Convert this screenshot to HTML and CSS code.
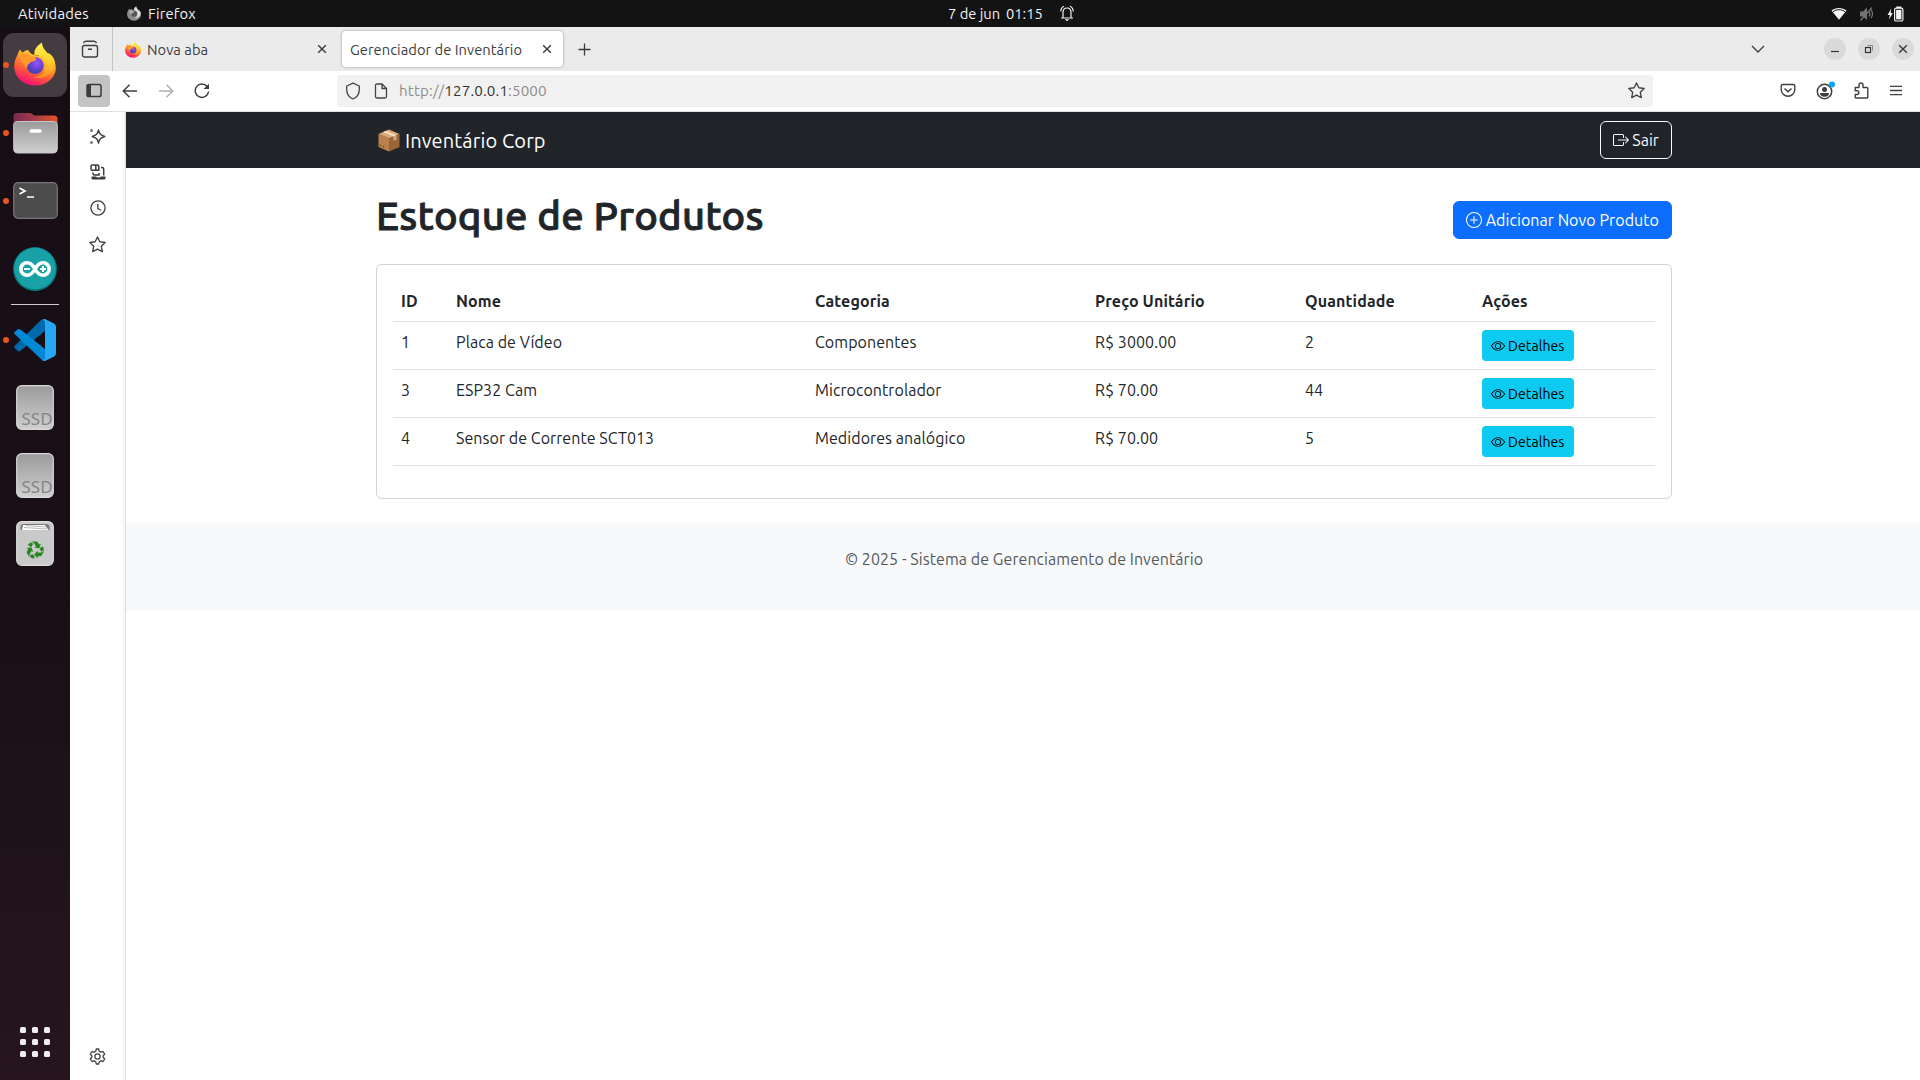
FILE: index.html
```html
<!DOCTYPE html>
<html lang="pt-BR">
<head>
<meta charset="utf-8">
<title>Gerenciador de Inventário</title>
<link rel="stylesheet" href="styles.css">
</head>
<body>
<svg class="defs" width="0" height="0" aria-hidden="true">
  <defs>
    <linearGradient id="fx-body" x1=".8" y1="0" x2=".3" y2="1"><stop offset="0" stop-color="#fff44f"/><stop offset=".35" stop-color="#ffa62b"/><stop offset=".65" stop-color="#ff5a35"/><stop offset="1" stop-color="#f5087f"/></linearGradient>
    <linearGradient id="fx-tail" x1=".5" y1="0" x2=".5" y2="1"><stop offset="0" stop-color="#fff550"/><stop offset=".5" stop-color="#ffd22c"/><stop offset="1" stop-color="#ff8d24"/></linearGradient>
    <radialGradient id="fx-globe" cx=".6" cy=".35"><stop offset="0" stop-color="#9059ff"/><stop offset=".6" stop-color="#7340e0"/><stop offset="1" stop-color="#4b45b5"/></radialGradient>
    <linearGradient id="gray" x1="0" y1="0" x2="0" y2="1"><stop offset="0" stop-color="#9b9b9b"/><stop offset="1" stop-color="#cfcfcf"/></linearGradient>
    <linearGradient id="folder" x1="0" y1="0" x2="1" y2="0"><stop offset="0" stop-color="#762b50"/><stop offset=".5" stop-color="#a83c46"/><stop offset="1" stop-color="#e95420"/></linearGradient>
    <symbol id="firefox" viewBox="0 0 42 44">
      <path fill="url(#fx-body)" d="M3 14C4 11 5 9 6 7.500C7 9 8 10 9 10.500C10 9 12 8 14 8C16 12 20 13 25 14C30 13 34 9 37 13C41 18 43 25 41 31C38 39 30 43.500 21 43.500C10 43.500 1 36 .3 26C0 22 1 17 3 14Z"/>
      <path fill="url(#fx-tail)" d="M28 .5C21 5 20 9 20.500 13C29 13 33 20 31 27C30 32 25 35 20 35C29 38 38 33 40.500 25C42 20 40 15 36 12.500C37 14 37 16 37 17C35 10 28 8 28 .5Z"/>
      <circle fill="url(#fx-globe)" cx="21" cy="23.500" r="8.600"/>
      <path fill="#ff9a2b" d="M6 14C10 11 14 13 17 14.500C21 14 23 16 22 18C20 20 17 19 16 21C14 22 13 24 13 26C8 22 7 18 6 14Z"/>
    </symbol>
    <symbol id="firefox-mono" viewBox="0 0 42 44">
      <path fill="#8c8c8c" d="M3 14C4 11 5 9 6 7.500L9 10.500L14 8C16 12 20 13 25 14C30 13 34 9 37 13C41 18 43 25 41 31C38 39 30 43.500 21 43.500C10 43.500 1 36 .3 26C0 22 1 17 3 14Z"/>
      <path fill="#dcdcdc" d="M28 .5C21 5 20 9 20.500 13C29 13 33 20 31 27C30 32 25 35 20 35C29 38 38 33 40.500 25C42 20 40 15 36 12.500L37 17C35 10 28 8 28 .5Z"/>
      <circle fill="#555" cx="21" cy="23" r="9"/>
      <path fill="#aaa" d="M6 14C10 11 14 13 17 14.500C21 14 23 16 22 18C20 20 17 19 16 21L13 26C8 22 7 18 6 14Z"/>
    </symbol>
    <symbol id="close" viewBox="0 0 10 10"><path d="M1.200 1.200 8.800 8.800M8.800 1.200 1.200 8.800" fill="none" stroke="#3a3a3a" stroke-width="1.400"/></symbol>
    <symbol id="star" viewBox="0 0 16 16"><path d="M8 .9 10.200 5.400 15.200 6.100 11.600 9.700 12.500 14.700 8 12.300 3.500 14.700 4.400 9.700 .8 6.100 5.800 5.400Z" fill="none" stroke="#444" stroke-width="1.300" stroke-linejoin="round"/></symbol>
    <symbol id="eye" viewBox="0 0 16 16">
      <path d="M16 8s-3-5.500-8-5.500S0 8 0 8s3 5.500 8 5.500S16 8 16 8M1.173 8a13 13 0 0 1 1.660-2.043C4.120 4.668 5.880 3.500 8 3.500s3.879 1.168 5.168 2.457A13 13 0 0 1 14.828 8q-.086.130-.195.288c-.335.480-.830 1.120-1.465 1.755C11.879 11.332 10.119 12.500 8 12.500s-3.879-1.168-5.168-2.457A13 13 0 0 1 1.172 8z"/>
      <path d="M8 5.500a2.500 2.500 0 1 0 0 5 2.500 2.500 0 0 0 0-5M4.500 8a3.500 3.500 0 1 1 7 0 3.500 3.500 0 0 1-7 0"/>
    </symbol>
    <symbol id="ssd" viewBox="0 0 38 45">
      <rect x=".7" y=".7" width="36.600" height="43.600" rx="5" fill="url(#gray)" stroke="#d9d9d9" stroke-width="1.200"/>
      <text class="ssd-label" x="5.500" y="39.500">SSD</text>
    </symbol>
  </defs>
</svg>

<header class="topbar">
  <div class="topbar-left">
    <span class="activities">Atividades</span>
    <svg class="mono-logo" width="14" height="15"><use href="#firefox-mono"/></svg>
    <span class="app-name">Firefox</span>
  </div>
  <div class="clock">
    <span class="clock-date">7 de jun</span><span class="clock-time">01:15</span>
    <svg width="14" height="17" viewBox="0 0 14 17" fill="none" stroke="#f2f2f2" stroke-width="1.200"><path d="M1 13H13M3 13V7.500C3 4.500 4.500 3 7 3S11 4.500 11 7.500V13M.8 6.500C.8 3.800 2 2 4 1.200M13.200 6.500C13.200 3.800 12 2 10 1.200"/><path d="M4.800 14.300H9.200L7 16.300Z" fill="#fff" stroke="none"/></svg>
  </div>
  <div class="tray">
    <svg width="16" height="13" viewBox="0 0 16 13"><path d="M.5 3.600C4.500 0 11.500 0 15.500 3.600L8 12.800Z" fill="#f4f4f4"/><path d="M2 4.800C5.500 2 10.500 2 14 4.800" fill="none" stroke="#131313" stroke-width="1"/></svg>
    <svg width="16" height="16" viewBox="0 0 16 16" fill="none" stroke="#717171" stroke-width="1.300"><path d="M1 5.500H4L8 1.500V14L4 10.500H1Z" fill="#717171" stroke="none"/><path d="M1.500 14.500 13 1.500M10 5.500C11 7 11 9 10 10.500M12 4C14 6 14 10 12 12"/></svg>
    <svg width="17" height="16" viewBox="0 0 17 16"><path d="M4.300 2.500 .5 9H2.800L2 13.500 5.800 7H3.600Z" fill="#f4f4f4"/><rect x="7.600" y="2.200" width="8.300" height="12.800" rx="1.600" fill="none" stroke="#f4f4f4" stroke-width="1.200"/><rect x="9.300" y=".5" width="5" height="1.700" fill="#f4f4f4"/><rect x="9.100" y="3.800" width="5.300" height="9.600" fill="#f4f4f4"/></svg>
  </div>
</header>

<div class="desktop">
  <aside class="dock">
    <div class="dock-item running"><div class="dock-active"><svg width="42" height="44"><use href="#firefox"/></svg></div></div>
    <div class="dock-item running">
      <svg width="45" height="42" viewBox="0 0 45 42"><path d="M.5 12V4Q.5 1 3.500 1H17Q19 1 20.500 3Q21 3.500 22.500 3.500H41Q44.500 3.500 44.500 7V14H.5Z" fill="url(#folder)"/><rect x=".7" y="9.500" width="43.600" height="31.500" rx="4" fill="url(#gray)" stroke="#c6c6c6" stroke-width="1"/><rect x="16.500" y="17.300" width="12" height="3.400" rx="1.500" fill="#fff"/></svg>
    </div>
    <div class="dock-item running">
      <svg width="45" height="37" viewBox="0 0 45 37"><rect x=".7" y=".7" width="43.600" height="35.600" rx="4.500" fill="#4c4c4c" stroke="#777" stroke-width="1.200"/><path d="M6.500 6 12 9 6.500 12M14 15H21" fill="none" stroke="#fff" stroke-width="1.700"/></svg>
    </div>
    <div class="dock-item">
      <svg width="44" height="44" viewBox="0 0 44 44"><circle cx="22" cy="22" r="21.900" fill="#057b82"/><circle cx="22" cy="21.500" r="20.700" fill="#18a2a8"/><path d="M22 22C19.500 17.500 17 15.800 14 15.800A6.200 6.200 0 0 0 14 28.200C17 28.200 19.500 26.500 22 22C24.500 17.500 27 15.800 30 15.800A6.200 6.200 0 0 1 30 28.200C27 28.200 24.500 26.500 22 22Z" fill="none" stroke="#fff" stroke-width="3.600"/><path d="M11 22H17M27 22H33M30 19V25" stroke="#fff" stroke-width="2"/></svg>
    </div>
    <div class="dock-sep"></div>
    <div class="dock-item running">
      <svg width="42" height="42" viewBox="0 0 42 42"><path d="M.8 26.800 27 1 31 0V12L6.500 31.800Q5 33 3.500 31.800L1 29.500Q-.5 28 .8 26.800Z" fill="#0069ac"/><path d="M.8 15.200Q-.5 14 1 12.500L3.500 10.500Q5 9.300 6.500 10.500L31 30V42L28 41Z" fill="#0288d5"/><path d="M31 0 40 4.500Q42 5.500 42 8V34Q42 36.500 40 37.500L31 42Q29 42 28 41Q31 41 31 38V4Q31 1 28 .8Z" fill="#28a8f3"/></svg>
    </div>
    <div class="dock-item"><svg width="38" height="45"><use href="#ssd"/></svg></div>
    <div class="dock-item"><svg width="38" height="45"><use href="#ssd"/></svg></div>
    <div class="dock-item">
      <svg width="38" height="45" viewBox="0 0 38 45"><rect x=".7" y=".7" width="36.600" height="43.600" rx="5" fill="#c9c9c9" stroke="#dedede" stroke-width="1.200"/><path d="M4.500 9V6Q4.500 3 8 3H30Q33.500 3 33.500 6V9Z" fill="#777"/><path d="M6 9 7 4H29L32.500 9Z" fill="#fff"/><path d="M8 6.500 31 8M10 4.500 30 6" stroke="#999" stroke-width=".7"/>
        <g fill="#26871f"><g id="arm"><path d="M15.200 20.500H20.500Q21.300 20.500 21.800 21.300L23.200 23.600 25 22.600 23.200 27.300 18.200 26.500 20 25.500 17.900 21.900Z"/><path d="M14.700 21.200 17.300 22.700 15.300 26 11.700 24Z"/></g><use href="#arm" transform="rotate(120 19 29)"/><use href="#arm" transform="rotate(240 19 29)"/></g></svg>
    </div>
    <div class="apps-grid"><i></i><i></i><i></i><i></i><i></i><i></i><i></i><i></i><i></i></div>
  </aside>

  <section class="browser">
    <div class="tabbar">
      <div class="tab-overview"><svg width="18" height="18" viewBox="0 0 18 18" fill="none" stroke="#3f3f3f" stroke-width="1.400"><rect x="1.500" y="5.500" width="15" height="11.500" rx="2"/><path d="M2.500 3.200Q3 1.200 5 1.200H13Q15 1.200 15.500 3.200M7 9.300H11"/></svg></div>
      <div class="tab"><svg class="favicon" width="16" height="17"><use href="#firefox"/></svg><span class="tab-title">Nova aba</span><svg width="10" height="10"><use href="#close"/></svg></div>
      <div class="tab tab-current"><span class="tab-title">Gerenciador de Inventário</span><svg width="10" height="10"><use href="#close"/></svg></div>
      <svg class="new-tab" width="13" height="13" viewBox="0 0 13 13"><path d="M6.500 .5V12.500M.5 6.500H12.500" stroke="#3a3a3a" stroke-width="1.300"/></svg>
      <svg class="tabs-more" width="14" height="8" viewBox="0 0 14 8"><path d="M1 1 7 7 13 1" fill="none" stroke="#3f3f3f" stroke-width="1.400"/></svg>
      <div class="window-buttons">
        <span><svg width="10" height="10" viewBox="0 0 10 10"><path d="M1 7.500H9" stroke="#333" stroke-width="1.200"/></svg></span>
        <span><svg width="10" height="10" viewBox="0 0 10 10" fill="none" stroke="#333"><rect x="1.500" y="3.500" width="5" height="5" stroke-width="1.200"/><path d="M3.500 1.500H8.500V6.500" stroke="#888"/></svg></span>
        <span><svg width="10" height="10"><use href="#close"/></svg></span>
      </div>
    </div>

    <div class="toolbar">
      <div class="side-toggle"><svg width="18" height="15" viewBox="0 0 18 15"><rect x="2" y="1.500" width="14" height="12" rx="1.800" fill="none" stroke="#3b3b3b" stroke-width="1.500"/><path d="M2 1.500H6V13.500H2Z" fill="#3b3b3b"/></svg></div>
      <svg class="nav-icon" width="16" height="14" viewBox="0 0 16 14" fill="none" stroke="#3f3f3f" stroke-width="1.500"><path d="M7.500 .8 1.300 7 7.500 13.200M1.500 7H15"/></svg>
      <svg class="nav-icon" width="16" height="14" viewBox="0 0 16 14" fill="none" stroke="#b0b0b0" stroke-width="1.500"><path d="M8.500 .8 14.700 7 8.500 13.200M14.500 7H1"/></svg>
      <svg class="nav-icon" width="16" height="16" viewBox="0 0 16 16"><path d="M13.200 3.500A6.700 6.700 0 1 0 14.600 8.500" fill="none" stroke="#3f3f3f" stroke-width="1.500"/><path d="M15 .8V6H9.500Z" fill="#3f3f3f"/></svg>
      <div class="urlbar">
        <svg class="u-shield" width="16" height="18" viewBox="0 0 16 18"><path d="M8 1.200 14.300 4V7.500C14.300 12 11.500 15.500 8 17C4.500 15.500 1.700 12 1.700 7.500V4Z" fill="none" stroke="#444" stroke-width="1.300" stroke-linejoin="round"/></svg>
        <svg class="u-page" width="14" height="16" viewBox="0 0 14 16"><path d="M3 1H8L12.500 5.500V13.500Q12.500 15 11 15H3Q1.500 15 1.500 13.500V2.500Q1.500 1 3 1ZM8 1V5.500H12.500" fill="none" stroke="#444" stroke-width="1.300"/></svg>
        <span class="url">http://<b>127.0.0.1</b>:5000</span>
        <svg class="u-star" width="17" height="17"><use href="#star"/></svg>
      </div>
      <div class="tool-icons">
        <svg width="16" height="15" viewBox="0 0 16 15" fill="none" stroke="#3f3f3f" stroke-width="1.400"><path d="M2.500 1.500H13.500Q14.800 1.500 14.800 3V6.500A6.800 6.800 0 0 1 1.200 6.500V3Q1.200 1.500 2.500 1.500ZM4.500 5.500 8 8.800 11.500 5.500"/></svg>
        <svg width="20" height="20" viewBox="0 0 20 20"><circle cx="9.500" cy="10.500" r="7.200" fill="none" stroke="#3f3f3f" stroke-width="1.500"/><circle cx="9.500" cy="8.500" r="2.500" fill="#3f3f3f"/><path d="M5 12H14Q14 15.800 9.500 15.800T5 12Z" fill="#3f3f3f"/><circle cx="17" cy="3.500" r="3" fill="#00a8f5"/></svg>
        <svg width="15" height="17" viewBox="0 0 15 17"><path d="M1.200 5.500H5V3A2 2 0 0 1 9 3V5.500H13Q13.800 5.500 13.800 6.300V15Q13.800 16 13 16H2Q1.200 16 1.200 15V12.500H3A1.900 1.900 0 0 0 3 8.700H1.200Z" fill="none" stroke="#3f3f3f" stroke-width="1.400" stroke-linejoin="round"/></svg>
        <svg class="menu-icon" width="12" height="11" viewBox="0 0 12 11"><path d="M0 1.300H12M0 5.500H12M0 9.700H12" stroke="#3f3f3f" stroke-width="1.300"/></svg>
      </div>
    </div>

    <div class="viewport">
      <nav class="sidebar">
        <span><svg width="17" height="17" viewBox="0 0 17 17"><path d="M9.500 2C10.500 6 11.500 7 15.800 8.500C11.500 10 10.500 11 9.500 15C8.500 11 7.500 10 3.200 8.500C7.500 7 8.500 6 9.500 2Z" fill="none" stroke="#3f3f3f" stroke-width="1.400" stroke-linejoin="round"/><circle cx="2.500" cy="2.500" r="1.500" fill="#777"/><circle cx="2.500" cy="14.500" r="1.500" fill="#777"/></svg></span>
        <span><svg width="16" height="16" viewBox="0 0 16 16"><path d="M2.300 1H7.500Q8.800 1 8.800 2.300V6.200H2.300Q1 6.200 1 5V2.300Q1 1 2.300 1ZM5.800 1V6M11 3.500H12Q13.700 3.500 13.700 5V11.500M3 8.500V9.500Q3 11 4.500 11H9V9" fill="none" stroke="#3b3b3b" stroke-width="1.500"/><path d="M1.500 12.500H6Q6.500 13.500 8.500 13.500T11 12.500H15.500V14Q15.500 15.500 14 15.500H3Q1.500 15.500 1.500 14Z" fill="#3b3b3b"/></svg></span>
        <span><svg width="16" height="16" viewBox="0 0 16 16" fill="none" stroke="#3f3f3f" stroke-width="1.300"><circle cx="8" cy="8" r="7.100"/><path d="M7.800 3.800V8.500L11 10.200"/></svg></span>
        <span><svg width="17" height="17"><use href="#star"/></svg></span>
        <span class="settings"><svg width="17" height="17" viewBox="0 0 17 17" fill="none" stroke="#444" stroke-width="1.300" stroke-linejoin="round"><circle cx="8.500" cy="8.500" r="2.600"/><path d="M7.300 1H9.700L10.300 3.300 11.800 4.100 14 3.500 15.700 6 14.200 7.700V9.300L15.700 11 14 13.500 11.800 12.900 10.300 13.700 9.700 16H7.300L6.700 13.700 5.200 12.900 3 13.500 1.300 11 2.800 9.300V7.700L1.300 6 3 3.500 5.200 4.100 6.700 3.300Z"/></svg></span>
      </nav>

      <div class="page">
        <div class="navbar">
          <div class="container navbar-row">
            <div class="brand"><svg width="22" height="23" viewBox="0 0 22 23"><path d="M11 .5 21.500 5 11 9.500 .5 5Z" fill="#dba872"/><path d="M.5 5 11 9.500V22.500L.5 18Z" fill="#b98050"/><path d="M11 9.500 21.500 5V18L11 22.500Z" fill="#9c6536"/><path d="M5 3 15.500 7.600 18.500 6.300 8 1.700Z" fill="#f6dfbd"/><path d="M15.500 7.600V12.500L17 10.800 18.500 11.200V6.300Z" fill="#c5ab90"/><path d="M2.500 15.500V17.200M5.500 16.700V18.400" stroke="#7b4a23" stroke-width="1.300"/></svg><span>Inventário Corp</span></div>
            <a class="btn btn-outline"><svg width="16" height="16" viewBox="0 0 16 16" fill="currentColor"><path fill-rule="evenodd" d="M10 12.500a.5.5 0 0 1-.5.5h-8a.5.5 0 0 1-.5-.5v-9a.5.5 0 0 1 .5-.5h8a.5.5 0 0 1 .5.5v2a.5.5 0 0 0 1 0v-2A1.500 1.500 0 0 0 9.500 2h-8A1.500 1.500 0 0 0 0 3.500v9A1.500 1.500 0 0 0 1.500 14h8a1.500 1.500 0 0 0 1.500-1.500v-2a.5.5 0 0 0-1 0z"/><path fill-rule="evenodd" d="M15.854 8.354a.5.5 0 0 0 0-.708l-3-3a.5.5 0 0 0-.708.708L14.293 7.500H5.500a.5.5 0 0 0 0 1h8.793l-2.147 2.146a.5.5 0 0 0 .708.708z"/></svg><span>Sair</span></a>
          </div>
        </div>

        <main class="container main">
          <div class="heading">
            <h1>Estoque de Produtos</h1>
            <a class="btn btn-primary"><svg width="16" height="16" viewBox="0 0 16 16" fill="currentColor"><path d="M8 15A7 7 0 1 1 8 1a7 7 0 0 1 0 14m0 1A8 8 0 1 0 8 0a8 8 0 0 0 0 16"/><path d="M8 4a.5.5 0 0 1 .5.5v3h3a.5.5 0 0 1 0 1h-3v3a.5.5 0 0 1-1 0v-3h-3a.5.5 0 0 1 0-1h3v-3A.5.5 0 0 1 8 4"/></svg><span>Adicionar Novo Produto</span></a>
          </div>
          <div class="card">
            <table class="table">
              <colgroup><col class="c-id"><col class="c-name"><col class="c-cat"><col class="c-price"><col class="c-qty"><col class="c-act"></colgroup>
              <thead><tr><th>ID</th><th>Nome</th><th>Categoria</th><th>Preço Unitário</th><th>Quantidade</th><th>Ações</th></tr></thead>
              <tbody>
                <tr><td>1</td><td>Placa de Vídeo</td><td>Componentes</td><td>R$ 3000.00</td><td>2</td><td><a class="btn-info"><svg width="14" height="14"><use href="#eye"/></svg><span>Detalhes</span></a></td></tr>
                <tr><td>3</td><td>ESP32 Cam</td><td>Microcontrolador</td><td>R$ 70.00</td><td>44</td><td><a class="btn-info"><svg width="14" height="14"><use href="#eye"/></svg><span>Detalhes</span></a></td></tr>
                <tr><td>4</td><td>Sensor de Corrente SCT013</td><td>Medidores analógico</td><td>R$ 70.00</td><td>5</td><td><a class="btn-info"><svg width="14" height="14"><use href="#eye"/></svg><span>Detalhes</span></a></td></tr>
              </tbody>
            </table>
          </div>
        </main>

        <footer class="footer"><p>© 2025 - Sistema de Gerenciamento de Inventário</p></footer>
      </div>
    </div>
  </section>
</div>
</body>
</html>
```
FILE: styles.css
```css
* { box-sizing: border-box; }
html, body { margin: 0; height: 100%; }
body {
  display: flex;
  flex-direction: column;
  width: 1920px;
  height: 1080px;
  overflow: hidden;
  background: #fff;
  color: #212529;
  font-family: Ubuntu, "Noto Sans", sans-serif;
  font-size: 16px;
  line-height: 24px;
  letter-spacing: .06px;
}
svg { display: block; flex: none; }
.defs { position: absolute; }
.ssd-label { font: 17px "Noto Sans", sans-serif; letter-spacing: 0; fill: #858585; }

/* GNOME top bar */
.topbar {
  display: grid;
  grid-template-columns: 1fr auto 1fr;
  align-items: center;
  height: 27px;
  flex: none;
  background: #131313;
  color: #f2f2f2;
  font-size: 14.7px;
  letter-spacing: .2px;
  white-space: nowrap;
}
.topbar-left, .clock, .tray { display: flex; align-items: center; }
.activities { width: 127px; padding-left: 18px; }
.mono-logo { margin-right: 7px; }
.clock { width: 230px; padding-left: 103px; letter-spacing: 0; }
.clock-date { width: 58px; }
.clock-time { width: 54px; }
.tray { justify-content: flex-end; gap: 12px; padding-right: 16px; }

.desktop { display: flex; flex: 1; min-height: 0; }

/* Dock */
.dock {
  display: flex;
  flex-direction: column;
  width: 70px;
  padding: 4px 0 23px;
  background: linear-gradient(180deg, #170d14 0%, #1a0f17 55%, #26151f 100%);
}
.dock-item {
  position: relative;
  display: flex;
  align-items: center;
  justify-content: center;
  height: 68px;
  flex: none;
}
.dock-item > svg { margin-top: -1px; }
.running::before {
  content: "";
  position: absolute;
  z-index: 1;
  left: 3px;
  top: 31px;
  width: 6px;
  height: 6px;
  border-radius: 50%;
  background: #e95420;
}
.dock-active {
  display: flex;
  align-items: center;
  justify-content: center;
  width: 64px;
  height: 64px;
  border-radius: 11px;
  background: #453c42;
}
.dock-active svg { margin-top: -2px; }
.dock-sep { height: 1px; margin: 1px 11px; background: #d0cdcf; flex: none; }
.apps-grid {
  display: grid;
  grid-template-columns: repeat(3, 6px);
  gap: 6px;
  margin: auto auto 0;
}
.apps-grid i { height: 6px; border-radius: 1.5px; background: #f0eeee; }

/* Browser chrome */
.browser { display: flex; flex-direction: column; flex: 1; min-width: 0; }
.tabbar {
  display: flex;
  align-items: center;
  height: 44px;
  flex: none;
  background: #ebebeb;
  color: #3d3d3d;
  font-size: 14.7px;
  letter-spacing: .05px;
}
.tab-overview {
  display: flex;
  align-items: center;
  justify-content: center;
  width: 43px;
  height: 44px;
  padding-right: 2px;
  border-right: 1px solid #c4c4c4;
}
.tab {
  display: flex;
  align-items: center;
  width: 221px;
  height: 36px;
  padding: 0 11px 0 8px;
  white-space: nowrap;
}
.tab:not(.tab-current) { margin-left: 4px; }
.favicon { margin-right: 6px; }
.tab-title { flex: 1; padding-top: 1px; }
.tab-current {
  margin-left: 4px;
  border-radius: 4px;
  background: #fff;
  box-shadow: 0 0 3px rgba(0, 0, 0, .35);
}
.new-tab { margin-left: 15px; }
.tabs-more { margin-left: auto; margin-right: 59px; }
.window-buttons { display: flex; gap: 12px; margin-right: 6px; }
.window-buttons span {
  display: flex;
  align-items: center;
  justify-content: center;
  width: 22px;
  height: 22px;
  border-radius: 50%;
  background: #dadada;
}

.toolbar {
  display: flex;
  align-items: center;
  height: 41px;
  flex: none;
  padding: 0 18px 1px 8px;
  border-bottom: 1px solid #dfdfdf;
  background: #fff;
}
.side-toggle {
  display: flex;
  align-items: center;
  justify-content: center;
  width: 32px;
  height: 32px;
  margin-right: 12px;
  border-radius: 4px;
  background: #c4c4c4;
}
.nav-icon { margin-right: 20px; }
.urlbar {
  display: flex;
  align-items: center;
  width: 1316px;
  height: 32px;
  margin-left: 107px;
  padding: 0 8px;
  border-radius: 4px;
  background: #f1f1f1;
}
.u-page { margin-left: 13px; }
.url { flex: 1; margin-left: 11px; padding-top: 1px; color: #8d8d8d; font-size: 15.2px; letter-spacing: .13px; }
.url b { color: #333; font-weight: 400; }
.tool-icons { display: flex; align-items: center; gap: 19px; margin-left: auto; }
.menu-icon { margin-left: 2.5px; }

.viewport { display: flex; flex: 1; min-height: 0; }
.sidebar {
  display: flex;
  flex-direction: column;
  width: 56px;
  padding: 6px 0;
  border-right: 1px solid #dcdcdc;
  background: linear-gradient(90deg, #fff 50px, #f6f6f6);
}
.sidebar span { display: flex; align-items: center; justify-content: center; height: 36px; }
.sidebar .settings { margin-top: auto; }

/* Inventory page */
.page { flex: 1; }
.container { width: 1296px; margin-left: 250px; }
.navbar { height: 56px; padding: 9px 0; background: #212529; }
.navbar-row { display: flex; justify-content: space-between; align-items: center; }
.brand { display: flex; align-items: center; gap: 5.5px; padding: 1px 0 0 1.5px; color: #fff; font-size: 20px; letter-spacing: .13px; }
.btn {
  display: flex;
  align-items: center;
  gap: 3.5px;
  height: 38px;
  padding: 0 12px;
  border: 1px solid;
  border-radius: 6px;
  white-space: nowrap;
}
.btn-outline { border-color: #f8f9fa; color: #f8f9fa; }
.btn-primary { border-color: #0d6efd; background: #0d6efd; color: #fff; }
.main { padding-top: 24px; }
.heading { display: flex; justify-content: space-between; align-items: center; height: 56px; margin-bottom: 16px; }
.heading h1 {
  margin: 0 0 8px;
  font-size: 40px;
  font-weight: 500;
  line-height: 48px;
  letter-spacing: .25px;
  -webkit-text-stroke: .9px #212529;
}
.card { height: 235px; padding: 16px; border: 1px solid #d3d3d4; border-radius: 6px; }
.table { width: 1262px; border-collapse: separate; border-spacing: 0; table-layout: fixed; }
.c-id { width: 55px; }
.c-name { width: 359px; }
.c-cat { width: 280px; }
.c-price { width: 210px; }
.c-qty { width: 177px; }
.table th, .table td {
  height: 48px;
  padding: 8px;
  border-bottom: 1px solid #dee2e6;
  text-align: left;
  vertical-align: top;
  white-space: nowrap;
}
.table th { height: 41px; font-weight: 700; letter-spacing: .14px; }
.btn-info {
  display: inline-flex;
  align-items: center;
  gap: 3px;
  height: 31px;
  width: 92px;
  padding: 0 9px;
  border-radius: 4px;
  background: #0dcaf0;
  color: #000;
  font-size: 14px;
  letter-spacing: .1px;
  vertical-align: top;
}
.footer { height: 88px; margin-top: 24px; padding: 24px 0 24px 2px; background: #f8f9fa; }
.footer p { margin: 0; text-align: center; color: #55595d; }
```
